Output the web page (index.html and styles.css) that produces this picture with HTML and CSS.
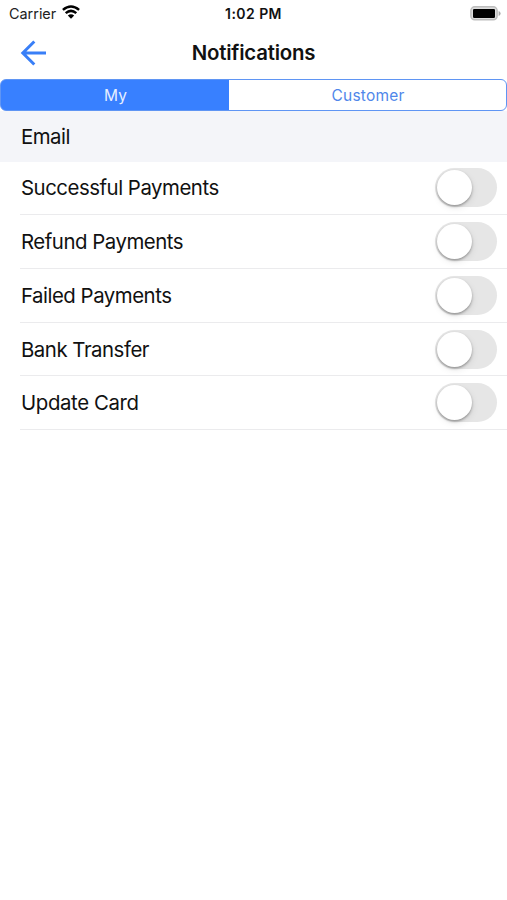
FILE: index.html
```html
<!DOCTYPE html>
<html lang="en">
<head>
<meta charset="utf-8">
<title>Notifications</title>
<link rel="stylesheet" href="styles.css">
</head>
<body>
<header class="status">
  <div class="carrier"><span>Carrier</span>
    <svg class="wifi" width="18" height="14" viewBox="0 0 18 14"><g fill="none" stroke="#000" stroke-width="2.5"><path d="M.9 4.9Q9-1.9 17.1 4.9"/><path d="M3.7 8.1Q9 3.6 14.3 8.1"/></g><path d="M5.8 10.6Q9 7.7 12.2 10.6L9 13.7Z"/></svg>
  </div>
  <time class="time">1:02 PM</time>
  <svg class="battery" width="31" height="15" viewBox="0 0 31 15"><rect x=".9" y=".8" width="26.2" height="13" rx="3.8" fill="#ddd" stroke="#bdbdbd" stroke-width="1.5"/><rect x="3" y="2.9" width="22" height="9" rx="1.2"/><path d="M28.6 5v5q2-.8 2-2.5T28.6 5Z" fill="#aaa"/></svg>
</header>
<nav class="navbar">
  <svg class="back" width="28" height="28" viewBox="0 0 28 28"><path d="M26 14H2.5M14.3 2.5L2.8 14L14.3 25.5" fill="none" stroke="#397ff7" stroke-width="3"/></svg>
  <h1 class="title">Notifications</h1>
</nav>
<div class="tabs">
  <div class="tab tab-active">My</div>
  <div class="tab">Customer</div>
</div>
<h2 class="section">Email</h2>
<ul class="list">
  <li class="row"><span>Successful Payments</span><i class="switch"></i></li>
  <li class="row"><span>Refund Payments</span><i class="switch"></i></li>
  <li class="row"><span>Failed Payments</span><i class="switch"></i></li>
  <li class="row"><span>Bank Transfer</span><i class="switch"></i></li>
  <li class="row"><span>Update Card</span><i class="switch"></i></li>
</ul>
</body>
</html>
```
FILE: styles.css
```css
* { box-sizing: border-box; }
body {
  margin: 0;
  height: 900px;
  background: #fff;
  color: #111;
  font-family: Inter, Roboto, sans-serif;
  overflow: hidden;
}
.status {
  display: grid;
  grid-template-columns: 1fr auto 1fr;
  align-items: center;
  height: 28px;
  padding: 0 6px 0 9px;
  font-size: 14.4px;
}
.carrier { display: flex; align-items: center; gap: 6px; margin-top: -2px; color: #222; }
.wifi { margin-top: -2px; }
.time { font-weight: 600; font-size: 14px; letter-spacing: 0.45px; margin: -2px 0 0 -3px; }
.battery { justify-self: end; margin-top: -2px; }
.navbar {
  display: grid;
  grid-template-columns: 28px 1fr 28px;
  align-items: center;
  height: 51px;
  padding: 0 20px;
}
.back { margin-top: -1px; }
.title { margin: -2px 0 0; text-align: center; font-size: 20.4px; font-weight: 600; letter-spacing: -0.2px; }
.tabs {
  display: grid;
  grid-template-columns: 229px 1fr;
  height: 32px;
  border: 1.5px solid #5f95f4;
  border-radius: 6px;
  background: linear-gradient(90deg, #3880ff 229px, #fff 229px) border-box;
}
.tab { display: grid; place-items: center; font-size: 15.5px; color: #5087ea; letter-spacing: 0.2px; }
.tab-active { color: #e6efff; }
.section {
  display: flex;
  align-items: center;
  height: 51px;
  margin: 0;
  padding: 0 21px;
  background: #f4f5f9;
  font-size: 20.4px;
  font-weight: 400;
  letter-spacing: -0.5px;
}
.list { margin: 0 0 0 20px; padding: 0; list-style: none; }
.row {
  display: flex;
  align-items: center;
  justify-content: space-between;
  height: 53.9px;
  padding: 0 10px 0 1px;
  border-bottom: 1.5px solid #ebebed;
  font-size: 20.4px;
  letter-spacing: -0.48px;
}
.row:first-child { height: 52.8px; }
.row:first-child span { margin-top: -1px; }
.row:last-child { letter-spacing: -0.38px; }
.switch {
  width: 62px;
  height: 39px;
  padding: 2px;
  border-radius: 20px;
  background: #e6e6e6;
}
.switch::before {
  content: "";
  display: block;
  width: 35px;
  height: 35px;
  border-radius: 50%;
  background: #fff;
  box-shadow: 0 1.5px 2.5px rgba(0, 0, 0, 0.32), 1px 3px 7px rgba(0, 0, 0, 0.08);
}
```
